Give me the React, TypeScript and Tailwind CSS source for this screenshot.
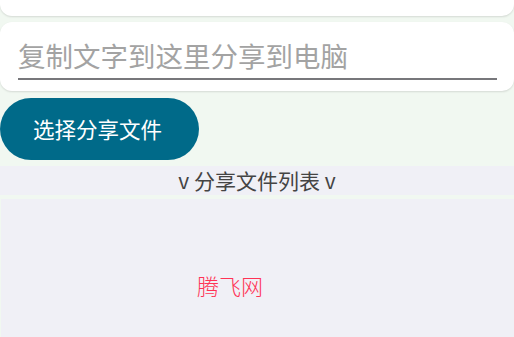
export default function App() {
  return (
    <div
      className="h-[337px] w-[514px] overflow-hidden bg-[#f1f8f1]"
      style={{ fontFamily: '"Noto Sans CJK SC", "Noto Sans", sans-serif' }}
    >
      {/* Card cut off at the top */}
      <div className="-mt-[40px] h-[56px] rounded-xl bg-white shadow-[0_1px_2px_rgba(0,0,0,0.12)]" />

      {/* Text share card */}
      <div className="mt-[6px] h-[69px] rounded-xl bg-white px-[18px] pt-[14px] shadow-[0_1px_2px_rgba(0,0,0,0.12)]">
        <input
          type="text"
          placeholder="复制文字到这里分享到电脑"
          className="block h-[44px] w-[479px] border-b-2 border-[#77777b] bg-transparent pb-[5px] text-[27.5px] leading-[36px] text-[#333] outline-none placeholder:text-[#a3a3a3]"
        />
      </div>

      {/* Pick file button */}
      <div className="mt-[7px]">
        <button className="flex h-[62px] w-[199px] items-center justify-center rounded-full bg-[#006a89] pr-[4px] text-[21.5px] text-white">
          选择分享文件
        </button>
      </div>

      {/* List header */}
      <div className="mt-[6px] flex h-[29px] items-center justify-center bg-[#f0f0f6] text-[21px] text-[#444]">
        v 分享文件列表 v
      </div>

      {/* File list */}
      <div className="ml-px mt-[4px] flex h-[160px] items-start justify-start bg-[#f0f0f6] pl-[196px] pt-[71px]">
        <span className="text-[22px] font-light leading-[30px] text-[#ff3355]">腾飞网</span>
      </div>
    </div>
  )
}
